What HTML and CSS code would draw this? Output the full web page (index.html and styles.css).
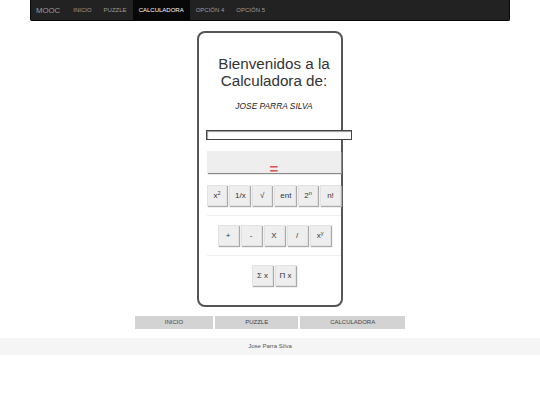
FILE: index.html
```html
<!DOCTYPE html>
<html lang="es">
<head>
<meta charset="utf-8">
<title>Calculadora</title>
<link rel="stylesheet" href="styles.css">
</head>
<body>
<nav class="navbar">
  <span class="brand">MOOC</span>
  <a class="nav-link" href="#">INICIO</a>
  <a class="nav-link" href="#">PUZZLE</a>
  <a class="nav-link active" href="#">CALCULADORA</a>
  <a class="nav-link" href="#">OPCIÓN 4</a>
  <a class="nav-link" href="#">OPCIÓN 5</a>
</nav>

<main class="card">
  <h1 class="title">Bienvenidos a la Calculadora de:</h1>
  <p class="name">JOSE PARRA SILVA</p>
  <input class="display" type="text">
  <button class="equal"><span>=</span></button>
  <div class="row row-1">
    <button class="key key-narrow">x<sup>2</sup></button>
    <button class="key">1/x</button>
    <button class="key key-narrow">√</button>
    <button class="key">ent</button>
    <button class="key key-narrow">2<sup>n</sup></button>
    <button class="key">n!</button>
  </div>
  <hr class="sep">
  <div class="row row-2">
    <button class="key">+</button>
    <button class="key">-</button>
    <button class="key">X</button>
    <button class="key">/</button>
    <button class="key">x<sup>y</sup></button>
  </div>
  <hr class="sep">
  <div class="row row-3">
    <button class="key key-sum">Σ x</button>
    <button class="key key-sum">Π x</button>
  </div>
</main>

<div class="bottom-nav">
  <a class="bn-item" href="#">INICIO</a>
  <a class="bn-item" href="#">PUZZLE</a>
  <a class="bn-item" href="#">CALCULADORA</a>
</div>

<footer class="footer">Jose Parra Silva</footer>
</body>
</html>
```

FILE: styles.css
```css
* { box-sizing: border-box; }

html, body {
  margin: 0;
  padding: 0;
  background: #fff;
  font-family: "Liberation Sans", Arial, sans-serif;
  color: #333;
}

.navbar {
  width: 480px;
  height: 21px;
  margin: 0 auto;
  background: #222;
  border: 1px solid #080808;
  border-top: none;
  border-radius: 0 0 2px 2px;
  display: flex;
  align-items: stretch;
}

.brand {
  font-size: 7.8px;
  color: #9d9d9d;
  padding: 0 7px 0 5px;
  display: flex;
  align-items: center;
}

.nav-link {
  font-size: 6px;
  color: #9d9d9d;
  text-decoration: none;
  padding: 0 6px;
  display: flex;
  align-items: center;
}

.nav-link.active {
  background: #080808;
  color: #fff;
}

.card {
  width: 146px;
  margin: 10px auto 0;
  border: 2px solid #555;
  border-radius: 8px;
  padding: 0 0 19px 8px;
  display: flex;
  flex-direction: column;
  align-items: stretch;
}

.title {
  margin: 22px 0 0;
  font-size: 15.2px;
  line-height: 17px;
  font-weight: normal;
  text-align: center;
  color: #333;
}

.name {
  margin: 12px 0 0;
  font-size: 8.4px;
  line-height: 10px;
  font-style: italic;
  text-align: center;
  color: #222;
}

.display {
  margin: 19px 0 0 -1px;
  width: 146px;
  height: 10px;
  padding: 0;
  border: 1px solid #444;
  box-shadow: inset 1px 1px 1px #999;
  background: #fff;
}

.equal {
  margin-top: 11px;
  height: 22px;
  border: none;
  background: #eee;
  box-shadow: 1px 1px 1px #888;
  padding: 10px 0 0;
  font-family: "Liberation Sans", Arial, sans-serif;
  font-size: 15px;
  line-height: 15px;
  font-weight: bold;
  color: #d9534f;
  overflow: visible;
}

.row {
  display: flex;
  justify-content: center;
  gap: 2px;
}

.row-1 { margin-top: 12px; }

.key {
  height: 21px;
  min-width: 21px;
  padding: 0 5px;
  border: 1px solid #e2e2e2;
  background: #eee;
  box-shadow: 1px 1px 1px #aaa;
  font-family: "Liberation Sans", Arial, sans-serif;
  font-size: 8px;
  color: #333;
  line-height: 1;
}

.key-narrow {
  min-width: 20px;
  padding: 0 4px;
}

.key-sum {
  padding: 0 3px;
}

.key sup {
  font-size: 5.5px;
  vertical-align: 3px;
  line-height: 0;
}

.sep {
  margin: 9px 0;
  border: none;
  border-top: 1px solid #f0f0f0;
  height: 0;
}

.bottom-nav {
  margin-top: 9px;
  display: flex;
  justify-content: center;
  gap: 2px;
}

.bn-item {
  height: 13px;
  padding: 0 30px;
  background: #d3d3d3;
  color: #444;
  font-size: 6px;
  line-height: 13px;
  text-decoration: none;
}

.footer {
  margin-top: 9px;
  height: 17px;
  background: #f5f5f5;
  font-size: 6px;
  line-height: 17px;
  text-align: center;
  color: #555;
}
```
